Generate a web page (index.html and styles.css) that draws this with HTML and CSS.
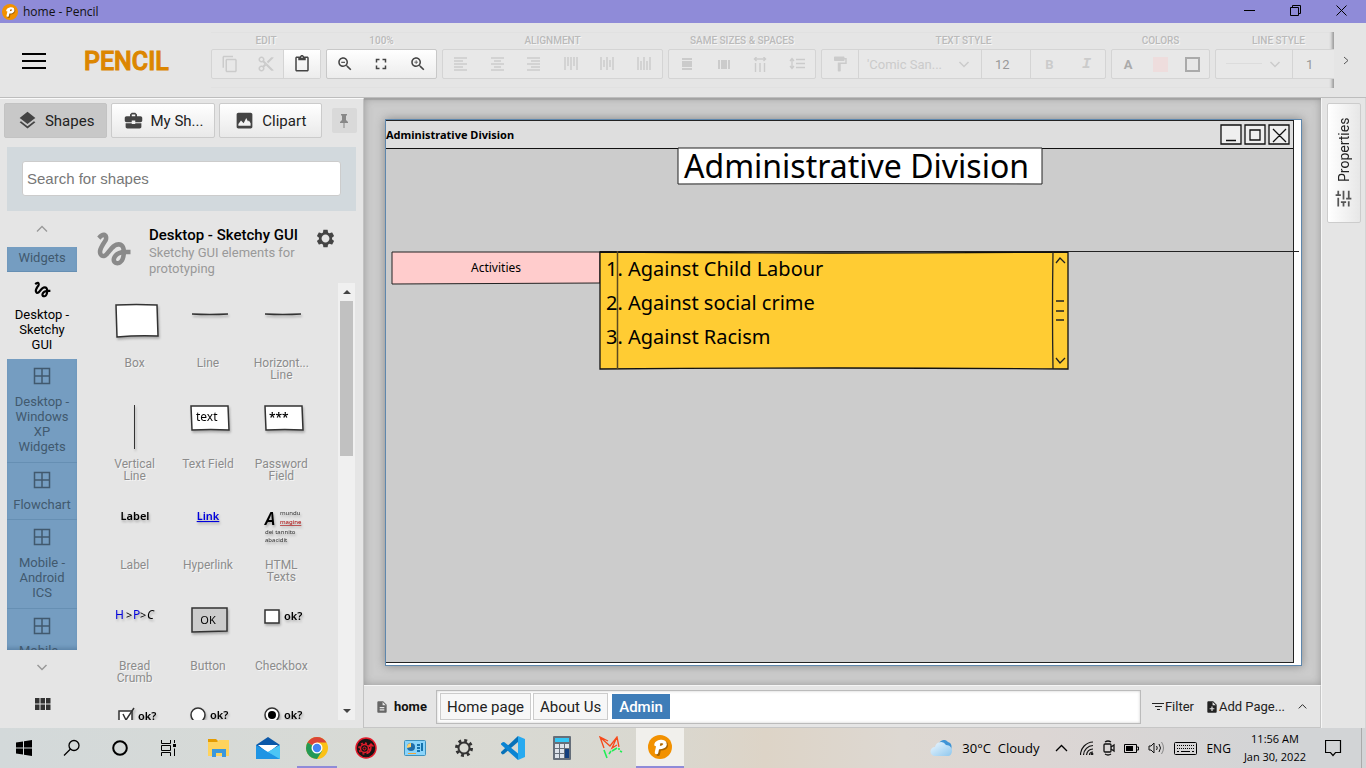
FILE: index.html
```html
<!DOCTYPE html>
<html lang="en">
<head>
<meta charset="utf-8">
<title>home - Pencil</title>
<link rel="stylesheet" href="styles.css">
</head>
<body>
<svg class="defs" aria-hidden="true">
  <symbol id="pencil-logo" viewBox="0 0 24 24"><circle cx="12" cy="12" r="12" fill="#f29100"/><path d="M9 18l2-10M8.500 9.500c1-3 8-4.500 8.500-1 .5 3-3 4.500-6 4" fill="none" stroke="#a66300" stroke-width="4" stroke-linecap="round" transform="translate(1 1)"/><path d="M8.500 17.500l2-9M8 9.500c1-3 8.500-4.500 9-1 .5 3-3.500 4.500-6.500 4" fill="none" stroke="#fff" stroke-width="3.500" stroke-linecap="round"/></symbol>
  <symbol id="copy" viewBox="0 0 24 24"><path d="M16 1H4c-1.100 0-2 .9-2 2v14h2V3h12V1zm3 4H8c-1.100 0-2 .9-2 2v14c0 1.100.9 2 2 2h11c1.100 0 2-.9 2-2V7c0-1.100-.9-2-2-2zm0 16H8V7h11v14z"/></symbol>
  <symbol id="cut" viewBox="0 0 24 24"><path d="M9.640 7.640c.23-.5.360-1.050.360-1.640 0-2.210-1.790-4-4-4S2 3.790 2 6s1.790 4 4 4c.59 0 1.140-.13 1.640-.36L10 12l-2.360 2.360C7.140 14.130 6.590 14 6 14c-2.210 0-4 1.790-4 4s1.790 4 4 4 4-1.790 4-4c0-.59-.13-1.140-.36-1.640L12 14l7 7h3v-1L9.640 7.640zM6 8c-1.100 0-2-.89-2-2s.9-2 2-2 2 .89 2 2-.9 2-2 2zm0 12c-1.100 0-2-.89-2-2s.9-2 2-2 2 .89 2 2-.9 2-2 2zm6-7.500c-.28 0-.5-.22-.5-.5s.22-.5.5-.5.5.22.5.5-.22.5-.5.5zM19 3l-6 6 2 2 7-7V3z"/></symbol>
  <symbol id="paste" viewBox="0 0 24 24"><path d="M19 2h-4.180C14.400.84 13.300 0 12 0c-1.300 0-2.400.84-2.820 2H5c-1.100 0-2 .9-2 2v16c0 1.100.9 2 2 2h14c1.100 0 2-.9 2-2V4c0-1.100-.9-2-2-2zm-7 0c.55 0 1 .45 1 1s-.45 1-1 1-1-.45-1-1 .45-1 1-1zm7 18H5V4h2v3h10V4h2v16z"/></symbol>
  <symbol id="lens" viewBox="0 0 24 24"><path d="M15.500 14h-.79l-.28-.27C15.410 12.590 16 11.110 16 9.500 16 5.910 13.090 3 9.500 3S3 5.910 3 9.500 5.910 16 9.500 16c1.610 0 3.090-.59 4.230-1.570l.27.28v.79l5 4.990L20.490 19l-4.990-5zm-6 0C7.010 14 5 11.990 5 9.500S7.010 5 9.500 5 14 7.010 14 9.500 11.990 14 9.500 14z"/></symbol>
  <symbol id="fit" viewBox="0 0 24 24"><path d="M7 14H5v5h5v-2H7v-3zm-2-4h2V7h3V5H5v5zm12 7h-3v2h5v-5h-2v3zM14 5v2h3v3h2V5h-5z"/></symbol>
  <symbol id="paint" viewBox="0 0 24 24"><path d="M18 4V3c0-.55-.45-1-1-1H5c-.55 0-1 .45-1 1v4c0 .55.45 1 1 1h12c.55 0 1-.45 1-1V6h1v4H9v11c0 .55.45 1 1 1h2c.55 0 1-.45 1-1v-9h8V4h-3z"/></symbol>
  <symbol id="layers" viewBox="0 0 24 24"><path d="M11.990 18.540l-7.370-5.730L3 14.070l9 7 9-7-1.630-1.270-7.380 5.740zM12 16l7.360-5.730L21 9l-9-7-9 7 1.630 1.270L12 16z"/></symbol>
  <symbol id="case" viewBox="0 0 24 24"><path d="M10 16v-1H3v4c0 1.110.89 2 2 2h14c1.110 0 2-.89 2-2v-4h-7v1h-4zm10-9h-4V5l-2-2h-4L8 5v2H4c-1.100 0-2 .9-2 2v3c0 1.110.89 2 2 2h6v-2h4v2h6c1.100 0 2-.9 2-2V9c0-1.100-.9-2-2-2zm-6 0h-4V5h4v2z"/></symbol>
  <symbol id="image" viewBox="0 0 24 24"><path fill-rule="evenodd" d="M21 19V5c0-1.100-.9-2-2-2H5c-1.100 0-2 .9-2 2v14c0 1.100.9 2 2 2h14c1.100 0 2-.9 2-2zM5 18v-2l3-4 3 3 3-6 2 4 1-1 2 3v3z"/></symbol>
  <symbol id="gesture" viewBox="0 0 24 24"><path d="M4.590 6.890c.7-.71 1.400-1.350 1.710-1.220.5.2 0 1.030-.3 1.520-.25.42-2.860 3.890-2.860 6.310 0 1.280.48 2.340 1.340 2.980.75.56 1.740.73 2.640.46 1.070-.31 1.950-1.400 3.060-2.770 1.210-1.490 2.830-3.440 4.080-3.440 1.630 0 1.650 1.010 1.760 1.790-3.780.64-5.380 3.670-5.380 5.370 0 1.700 1.440 3.090 3.210 3.090 1.630 0 4.290-1.330 4.690-6.100H21v-2.500h-2.470c-.15-1.650-1.090-4.200-4.030-4.200-2.250 0-4.180 1.910-4.940 2.840-.58.73-2.060 2.480-2.290 2.720-.25.3-.68.84-1.110.84-.45 0-.72-.83-.36-1.920.35-1.090 1.400-2.860 1.850-3.520.78-1.140 1.300-1.920 1.300-3.280C8.950 3.690 7.310 3 6.440 3 5.120 3 3.970 4 3.720 4.250c-.36.36-.66.66-.88.93l1.750 1.710zm9.290 11.660c-.31 0-.74-.26-.74-.72 0-.6.73-2.200 2.870-2.760-.3 2.690-1.430 3.480-2.130 3.480z"/></symbol>
  <symbol id="gear" viewBox="0 0 24 24"><path d="M19.430 12.980c.04-.32.07-.64.07-.98s-.03-.66-.07-.98l2.110-1.650c.19-.15.24-.42.12-.64l-2-3.460c-.12-.22-.39-.3-.61-.22l-2.490 1c-.52-.4-1.080-.73-1.690-.98l-.38-2.650C14.460 2.180 14.250 2 14 2h-4c-.25 0-.46.18-.49.42l-.38 2.650c-.61.25-1.170.59-1.690.98l-2.490-1c-.23-.09-.49 0-.61.22l-2 3.460c-.13.22-.07.49.12.64l2.110 1.650c-.04.32-.07.65-.07.98s.03.66.07.98l-2.110 1.650c-.19.15-.24.42-.12.64l2 3.460c.12.22.39.3.61.22l2.490-1c.52.4 1.080.73 1.690.98l.38 2.650c.03.24.24.42.49.42h4c.25 0 .46-.18.49-.42l.38-2.650c.61-.25 1.170-.59 1.690-.98l2.490 1c.23.09.49 0 .61-.22l2-3.460c.12-.22.07-.49-.12-.64l-2.110-1.650zM12 16.500c-2.480 0-4.500-2.020-4.500-4.500s2.020-4.500 4.500-4.500 4.500 2.020 4.500 4.500-2.020 4.500-4.500 4.500z"/></symbol>
  <symbol id="panes" viewBox="0 0 18 18"><path d="M1.500 1.500h15v15h-15zM9 1.500v15M1.500 9h15" fill="none" stroke="currentColor" stroke-width="1.500"/></symbol>
  <symbol id="pin" viewBox="0 0 12 16"><path d="M3 1h6v1.500H8V7l2 2v1H2V9l2-2V2.500H3zM5.500 10h1v5h-1z"/></symbol>
  <symbol id="tune" viewBox="0 0 24 24"><path d="M3 17v2h6v-2H3zM3 5v2h10V5H3zm10 16v-2h8v-2h-8v-2h-2v6h2zM7 9v2H3v2h4v2h2V9H7zm14 4v-2H11v2h10zm-6-4h2V7h4V5h-4V3h-2v6z"/></symbol>
  <symbol id="doc" viewBox="0 0 24 24"><path d="M14 2H6c-1.100 0-1.990.9-1.990 2L4 20c0 1.100.89 2 1.990 2H18c1.100 0 2-.9 2-2V8l-6-6zm2 16H8v-2h8v2zm0-4H8v-2h8v2zm-3-5V3.500L18.500 9H13z"/></symbol>
  <symbol id="add" viewBox="0 0 24 24"><path d="M14 2H6c-1.100 0-1.990.9-1.990 2L4 20c0 1.100.89 2 1.990 2H18c1.100 0 2-.9 2-2V8l-6-6zm2 14h-3v3h-2v-3H8v-2h3v-3h2v3h3v2zm-3-7V3.500L18.500 9H13z"/></symbol>
  <symbol id="up" viewBox="0 0 12 12"><path d="M1 8.500l5-5 5 5" fill="none" stroke="currentColor" stroke-width="1.300"/></symbol>
  <symbol id="down" viewBox="0 0 12 12"><path d="M1.500 4L6 8.500 10.500 4" fill="none" stroke="currentColor" stroke-width="1.500"/></symbol>
</svg>

<header class="titlebar">
  <svg class="app-icon"><use href="#pencil-logo"/></svg>
  <h1 class="window-name">home - Pencil</h1>
  <button class="sys" aria-label="Minimize"><svg width="11" height="11"><path d="M0 5.500h11" stroke="#000"/></svg></button>
  <button class="sys" aria-label="Restore"><svg width="11" height="11"><path d="M.5 2.500h8v8h-8zM2.500 2V.5h8v8H9" fill="none" stroke="#000"/></svg></button>
  <button class="sys" aria-label="Close"><svg width="11" height="11"><path d="M.5.5l10 10M10.500.5l-10 10" stroke="#000"/></svg></button>
</header>

<div class="toolbar">
  <button class="burger" aria-label="Menu"><svg width="24" height="16"><path d="M0 1h24M0 8h24M0 15h24" stroke="#000" stroke-width="2"/></svg></button>
  <div class="brand">PENCIL</div>
  <div class="groups">
    <section class="group g-edit"><h2>EDIT</h2><div class="bar">
      <button disabled aria-label="Copy"><svg class="i18"><use href="#copy"/></svg></button>
      <button disabled aria-label="Cut"><svg class="i18"><use href="#cut"/></svg></button>
      <button class="on sep" aria-label="Paste"><svg class="i18"><use href="#paste"/></svg></button></div></section>
    <section class="group g-zoom"><h2>100%</h2><div class="bar on">
      <button aria-label="Zoom out"><svg class="i18" viewBox="0 0 24 24"><use href="#lens"/><path d="M7 9h5v1.500H7z"/></svg></button>
      <button aria-label="Fit"><svg class="i18"><use href="#fit"/></svg></button>
      <button aria-label="Zoom in"><svg class="i18" viewBox="0 0 24 24"><use href="#lens"/><path d="M12 10h-2v2H9v-2H7V9h2V7h1v2h2z"/></svg></button></div></section>
    <section class="group g-align"><h2>ALIGNMENT</h2><div class="bar">
      <button disabled aria-label="Align left"><svg width="14" height="14"><path d="M0 1h13M0 4h9M0 7h13M0 10h9M0 13h13" stroke="currentColor" stroke-width="1.400"/></svg></button>
      <button disabled aria-label="Align center"><svg width="14" height="14"><path d="M0 1h13M3 4h7M0 7h13M3 10h7M0 13h13" stroke="currentColor" stroke-width="1.400"/></svg></button>
      <button disabled aria-label="Align right"><svg width="14" height="14"><path d="M0 1h13M4 4h9M0 7h13M4 10h9M0 13h13" stroke="currentColor" stroke-width="1.400"/></svg></button>
      <button disabled aria-label="Align top"><svg width="14" height="14"><path d="M1 0v13M4 0v9M7 0v13M10 0v9M13 0v13" stroke="currentColor" stroke-width="1.400"/></svg></button>
      <button disabled aria-label="Align middle"><svg width="14" height="14"><path d="M1 0v13M4 3v7M7 0v13M10 3v7M13 0v13" stroke="currentColor" stroke-width="1.400"/></svg></button>
      <button disabled aria-label="Align bottom"><svg width="14" height="14"><path d="M1 0v13M4 4v9M7 0v13M10 4v9M13 0v13" stroke="currentColor" stroke-width="1.400"/></svg></button></div></section>
    <section class="group g-same"><h2>SAME SIZES &amp; SPACES</h2><div class="bar">
      <button disabled aria-label="Same width"><svg width="14" height="14"><path d="M2 1h10v2H2zM2 4h10v6H2zM2 11h10v2H2z"/></svg></button>
      <button disabled aria-label="Same height"><svg width="14" height="14"><path d="M1 3h2v9H1zM4 3h6v9H4zM11 3h2v9h-2z"/></svg></button>
      <button disabled aria-label="Same horizontal spacing"><svg width="14" height="15"><path d="M2 2h10M3.500 0L1.500 2l2 2M10.500 0l2 2-2 2M2.500 6v9M7 6v9M11.500 6v9" fill="none" stroke="currentColor" stroke-width="1.400"/></svg></button>
      <button disabled aria-label="Same vertical spacing"><svg width="16" height="14"><path d="M3 2v9M1 4l2-2.500L5 4M1 9l2 2.500L5 9M7 2.500h9M7 6.500h9M7 10.500h9" fill="none" stroke="currentColor" stroke-width="1.300"/></svg></button></div></section>
    <section class="group g-text"><h2>TEXT STYLE</h2><div class="bar">
      <button disabled aria-label="Copy format" class="fixed"><svg class="i18"><use href="#paint"/></svg></button>
      <div class="pick font"><select disabled aria-label="Font"><option>'Comic San...</option></select><svg class="i12"><use href="#down"/></svg></div>
      <input class="num size" aria-label="Font size" value="12" disabled>
      <button disabled aria-label="Bold" class="bold sep">B</button>
      <button disabled aria-label="Italic" class="ital">I</button></div></section>
    <section class="group g-color"><h2>COLORS</h2><div class="bar">
      <button aria-label="Text color" class="ca">A</button>
      <button aria-label="Fill color"><span class="swatch pink"></span></button>
      <button aria-label="Line color"><span class="swatch line"></span></button></div></section>
    <section class="group g-line"><h2>LINE STYLE</h2><div class="bar">
      <div class="pick stroke"><select disabled aria-label="Line style"><option>&nbsp;</option></select><span class="dash"></span><svg class="i12"><use href="#down"/></svg></div>
      <input class="num sep" aria-label="Line width" value="1" disabled></div></section>
  </div>
  <button class="more" aria-label="More tools"><svg width="6" height="9"><path d="M1 1l4 3.500L1 8" fill="none" stroke="#555"/></svg></button>
</div>

<main class="work">
  <aside class="side">
    <nav class="tabs">
      <button class="tab active"><svg class="i20"><use href="#layers"/></svg>Shapes</button>
      <button class="tab"><svg class="i20"><use href="#case"/></svg>My Sh...</button>
      <button class="tab"><svg class="i20"><use href="#image"/></svg>Clipart</button>
      <button class="pin" aria-label="Pin"><svg width="12" height="16"><use href="#pin"/></svg></button>
    </nav>
    <div class="search"><input type="text" placeholder="Search for shapes" aria-label="Search for shapes"></div>
    <div class="browser">
      <div class="cats">
        <button class="arrow" aria-label="Scroll up"><svg class="i12"><use href="#up"/></svg></button>
        <div class="cat-list">
          <button class="cat first">Widgets</button>
          <button class="cat multi active"><svg class="i20"><use href="#gesture"/></svg>Desktop - Sketchy GUI</button>
          <button class="cat multi"><svg class="i18"><use href="#panes"/></svg>Desktop - Windows XP Widgets</button>
          <button class="cat"><svg class="i18"><use href="#panes"/></svg>Flowchart</button>
          <button class="cat multi"><svg class="i18"><use href="#panes"/></svg>Mobile - Android ICS</button>
          <button class="cat"><svg class="i18"><use href="#panes"/></svg>Mobile -</button>
        </div>
        <button class="arrow" aria-label="Scroll down"><svg class="i12"><use href="#down"/></svg></button>
        <button class="tiles" aria-label="All collections"><svg width="16" height="12" viewBox="0 0 16 12"><path d="M0 0h4.500v5.500H0zM5.500 0H10v5.500H5.500zM11 0h4.500v5.500H11zM0 6.500h4.500V12H0zM5.500 6.500H10V12H5.500zM11 6.500h4.500V12H11z"/></svg></button>
      </div>
      <section class="collection">
        <div class="col-head">
          <svg class="col-icon"><use href="#gesture"/></svg>
          <div class="col-text"><h2>Desktop - Sketchy GUI</h2><p>Sketchy GUI elements for prototyping</p></div>
          <button class="cog" aria-label="Collection settings"><svg class="i20"><use href="#gear"/></svg></button>
        </div>
        <div class="shape-scroll">
          <div class="shapes">
            <figure><svg class="thumb"><path d="M17 4q20-1 41 0l1 31q-20-1-41 1z" class="sk"/></svg><figcaption>Box</figcaption></figure>
            <figure><svg class="thumb"><path d="M20 13q18 1 36 0" class="sk"/></svg><figcaption>Line</figcaption></figure>
            <figure><svg class="thumb"><path d="M20 13q18 1 36 0" class="sk"/></svg><figcaption>Horizont... Line</figcaption></figure>
            <figure><svg class="thumb"><path d="M35.500 3v44" class="sk thin"/></svg><figcaption>Vertical Line</figcaption></figure>
            <figure><svg class="thumb"><path d="M19 4h37l1 24q-18-1-37 0z" class="sk"/><text x="24" y="19" class="t12">text</text></svg><figcaption>Text Field</figcaption></figure>
            <figure><svg class="thumb"><path d="M20 4h37l1 24q-18-1-37 0z" class="sk"/><text x="24" y="20" class="t12 b">***</text></svg><figcaption>Password Field</figcaption></figure>
            <figure><svg class="thumb"><text x="36" y="17" class="t11 b mid">Label</text></svg><figcaption>Label</figcaption></figure>
            <figure><svg class="thumb"><text x="36" y="17" class="t11 b mid blue u">Link</text></svg><figcaption>Hyperlink</figcaption></figure>
            <figure><svg class="thumb"><text x="20" y="22" class="big">A</text><text x="35" y="12" class="t6">mundu</text><text x="35" y="21" class="t6 red u">magine</text><text x="20" y="31" class="t6">dei tannito</text><text x="20" y="39" class="t6">abacidit</text></svg><figcaption>HTML Texts</figcaption></figure>
            <figure><svg class="thumb"><text x="16" y="15" class="t12 blue">H</text><text x="27" y="15" class="t11">&gt;</text><text x="34" y="15" class="t12 blue">P</text><text x="41" y="15" class="t11">&gt;</text><text x="48" y="15" class="t12 i">C</text></svg><figcaption>Bread Crumb</figcaption></figure>
            <figure><svg class="thumb"><path d="M20 4h35v23l-35 1z" class="sk gray"/><text x="36" y="20" class="t11 mid">OK</text></svg><figcaption>Button</figcaption></figure>
            <figure><svg class="thumb"><path d="M20 6h14v13H20z" class="sk"/><text x="39" y="16" class="t11 b">ok?</text></svg><figcaption>Checkbox</figcaption></figure>
            <figure><svg class="thumb"><path d="M20 6h13v13H20z" class="sk"/><path d="M24 9l3 6 8-12" class="sk no"/><text x="39" y="15" class="t11 b">ok?</text></svg></figure>
            <figure><svg class="thumb"><circle cx="26" cy="10" r="7" class="sk"/><text x="38" y="14" class="t11 b">ok?</text></svg></figure>
            <figure><svg class="thumb"><circle cx="27" cy="10" r="7" class="sk"/><circle cx="27" cy="10" r="4"/><text x="39" y="14" class="t11 b">ok?</text></svg></figure>
          </div>
          <div class="scrollbar"><svg width="17" height="18"><path d="M5 11l4-4 4 4z"/></svg><div class="thumbbar"></div><svg width="17" height="18"><path d="M5 7l4 4 4-4z"/></svg></div>
        </div>
      </section>
    </div>
  </aside>

  <section class="center">
    <div class="stage">
      <div class="page">
        <div class="mock-window">
          <div class="mock-title"><span>Administrative Division</span>
            <svg width="70" height="23"><path d="M1 2h20v19H1zM25 2h20v19H25zM49 2h20v19H49z" fill="#fff" fill-opacity=".5" stroke="#111" stroke-width="1.300"/><path d="M6 17.500h10M30 7h10v10H30zM53 6l13 13M66 6L53 19" fill="none" stroke="#111" stroke-width="1.300"/></svg>
          </div>
        </div>
        <div class="rule"></div>
        <div class="heading"><svg width="366" height="38"><path d="M1 1h364v36q-180-1-364 0z" fill="#fff" stroke="#222"/></svg><span>Administrative Division</span></div>
        <div class="act"><svg width="210" height="34"><path d="M1 1h208v31l-208 1z" fill="#fcc" stroke="#222"/></svg><span>Activities</span></div>
        <div class="note"><svg width="470" height="120"><path d="M1 1q230 2 468 0v117q-230-2-468 0z" fill="#fc3" stroke="#111" stroke-width="1.300"/><path d="M454 1q-1 60 0 117M457 12l4-5 5 5M457 107l4 5 5-5M457 50h8M457 60h8M457 69h8" fill="none" stroke="#222" stroke-width="1.300"/><path d="M18.500 0v118" stroke="#5a4920" stroke-width="1.500"/></svg>
          <ul><li>1. Against Child Labour</li><li>2. Against social crime</li><li>3. Against Racism</li></ul></div>
      </div>
    </div>
    <footer class="pages">
      <div class="crumb"><svg class="i14"><use href="#doc"/></svg><b>home</b></div>
      <div class="page-tabs"><button>Home page</button><button>About Us</button><button class="active">Admin</button></div>
      <button class="link filter"><svg width="13" height="9"><path d="M0 1.500h12M3 4.500h7M5 7.500h3" stroke="currentColor"/></svg>Filter</button>
      <button class="link addp"><svg class="i14"><use href="#add"/></svg>Add Page...</button>
      <button class="link fold" aria-label="Collapse"><svg width="9" height="9" viewBox="0 0 12 12"><use href="#up"/></svg></button>
    </footer>
  </section>

  <aside class="rail"><button class="props"><svg class="i20"><use href="#tune"/></svg>Properties</button></aside>
</main>

<footer class="taskbar">
  <button class="task" aria-label="Start"><svg width="16" height="16"><path d="M0 2.500l7-1V7.500H0zM8 1.300L16 0v7.500H8zM0 8.500h7v6l-7-1zM8 8.500h8V16l-8-1.300z"/></svg></button>
  <button class="task" aria-label="Search"><svg width="18" height="18"><circle cx="11" cy="6.500" r="5" fill="none" stroke="#000" stroke-width="1.300"/><path d="M7.500 10L1 16.500" stroke="#000" stroke-width="1.300"/></svg></button>
  <button class="task" aria-label="Cortana"><svg width="18" height="18"><circle cx="9" cy="9" r="6.800" fill="none" stroke="#000" stroke-width="2"/></svg></button>
  <button class="task" aria-label="Task view"><svg width="17" height="16"><path d="M1.500 0v3.500h9V0M1.500 16v-3.500h9V16M1.500 5.500h9v5h-9zM14.500 0v3M14.500 8.500V16" fill="none" stroke="#000"/><path d="M13 4h3v3h-3z"/></svg></button>
  <div class="apps">
    <button class="task" aria-label="Files"><svg width="22" height="20"><path d="M0 1h8l2 2h11v5H0z" fill="#e59c00"/><path d="M0 4h9l2-2h10v16H0z" fill="#ffd35c"/><path d="M4 19v-8h14v8h-4v-4H8v4z" fill="#3b98dc"/></svg></button>
    <button class="task" aria-label="Mail"><svg width="24" height="22"><path d="M0 8L12 0l12 8v6H0z" fill="#0b58a8"/><path d="M2 8h20l-10 8z" fill="#fff"/><path d="M24 8v14H0l12-7z" fill="#35b1ee"/><path d="M0 8l12 7 12 7H0z" fill="#1f95e4"/><path d="M24 8L12 15l12 7z" fill="#4cc6f5"/></svg></button>
    <button class="task run" aria-label="Chrome"><svg width="22" height="22" viewBox="0 0 22 22"><circle cx="11" cy="11" r="11" fill="#fbc116"/><path d="M11 11L1.500 5.500A11 11 0 0 1 20.500 5.500H11z" fill="#da4437"/><path d="M1.500 5.500A11 11 0 0 0 11 22l5-8-5-3z" fill="#239957"/><circle cx="11" cy="11" r="5.500" fill="#fff"/><circle cx="11" cy="11" r="4.200" fill="#4285f4"/></svg></button>
    <button class="task" aria-label="Driver Booster"><svg width="22" height="22" viewBox="0 0 22 22"><circle cx="11" cy="11" r="10" fill="#171414" stroke="#e31b2b" stroke-width="1.500"/><g fill="none" stroke="#e31b2b"><circle cx="9.500" cy="11.500" r="4" stroke-width="1.500"/><circle cx="9.500" cy="11.500" r="5.500" stroke-width="1.500" stroke-dasharray="2 2.300"/><circle cx="9.500" cy="11.500" r="1.500"/><path d="M12 16c4-1 4-4 4-8M13.500 9.500L16 7l2.500 2.500" stroke-width="1.500"/></g></svg></button>
    <button class="task" aria-label="Control panel"><svg width="22" height="16"><rect x=".5" y=".5" width="21" height="15" rx="1" fill="#8bd4fa" stroke="#3e91bd"/><circle cx="7" cy="7" r="4" fill="#206da9"/><path d="M7 7V3a4 4 0 0 0-4 5z" fill="#ffd06a"/><path d="M13 5h3M13 8h3M13 11h3M18 3v8" stroke="#1572ac" stroke-width="2"/><path d="M4 13.500h8" stroke="#f2a53a"/></svg></button>
    <button class="task" aria-label="Settings"><svg width="20" height="20" viewBox="0 0 20 20" fill="none" stroke="#333"><circle cx="10" cy="10" r="5.500" stroke-width="2"/><circle cx="10" cy="10" r="7.500" stroke-width="3" stroke-dasharray="2.900 2.990"/></svg></button>
    <button class="task" aria-label="Visual Studio Code"><svg width="24" height="24" viewBox="0 0 24 24"><path d="M17 0v6L3 18l-1.500.5L0 17v-1z" fill="#0871b8"/><path d="M0 7.500L2 6l1.500.3L17 17.500V24L0 8.500z" fill="#0a84d3"/><path d="M17 0l7 3v18l-7 3z" fill="#28aaf0"/></svg></button>
    <button class="task" aria-label="Calculator"><svg width="18" height="24"><rect width="18" height="24" rx="1" fill="#656e79"/><path d="M2 2h14v4H2z" fill="#34c6f4"/><path d="M2 8h4v4H2zM7 8h4v4H7zM12 8h4v4h-4zM2 13h4v4H2zM7 13h4v4H7zM2 18h4v4H2zM7 18h4v4H7z" fill="#dde3ea"/><path d="M12 13h4v9h-4z" fill="#143f7d"/></svg></button>
    <button class="task" aria-label="Fox"><svg width="24" height="24" fill="none" stroke-width="1.300"><path d="M5 12L1 1l8 4M2 2l9 8 7-9 2 10M18 1l-5 11 5-3" stroke="#f64a1b"/><path d="M5 14l3 8M12 15l-2 3M18 12l-5 3M20 12v2M23 16l-2-1" stroke="#20ee55" stroke-width="1.600"/></svg></button>
    <button class="task open" aria-label="Pencil"><svg width="24" height="24"><use href="#pencil-logo"/></svg></button>
  </div>
  <div class="tray">
    <svg width="23" height="17" viewBox="0 0 23 17"><defs><linearGradient id="cl" x2="1" y2="1"><stop stop-color="#eef8ff"/><stop offset="1" stop-color="#8ec7ee"/></linearGradient></defs><path d="M9 5a5 5 0 0 1 9-3c4 1 4 5 3 8z" fill="#3f94d6"/><path d="M5 16a4.500 4.500 0 0 1 0-9 6 6 0 0 1 11-2c4 0 6 3 6 6s-2 5-4 5z" fill="url(#cl)"/></svg>
    <span class="weather">30°C&nbsp; Cloudy</span>
    <svg class="t-up" width="13" height="8"><path d="M1 7l5.500-5.500L12 7" fill="none" stroke="#000" stroke-width="1.300"/></svg>
    <svg width="14" height="14" fill="none" stroke="#111"><path d="M.5 14A13 13 0 0 1 13 1M3.500 14A10 10 0 0 1 13 4.500M6.500 14A7 7 0 0 1 13 8M9.500 14q0-3 3.500-3" stroke-width="1.200"/><circle cx="12" cy="13" r="1" fill="#111"/></svg>
    <svg width="12" height="16" fill="none" stroke="#111" stroke-width="1.300"><rect x="1" y="4" width="7" height="8" rx="1"/><path d="M8 7l3-2v6L8 9M2 2q3-2 6 0M2 14q3 2 6 0"/></svg>
    <svg width="15" height="10"><path d="M.5 1.500h12v8H.5zM13 4h1.500v3H13" fill="none" stroke="#000"/><path d="M2 3h7v5H2z"/></svg>
    <svg width="17" height="14" fill="none" stroke="#111"><path d="M1 5h2l3-3v10L3 9H1zM8.500 5q1.500 2 0 4M11 3q3 4 0 8"/><path d="M13.500 1q4 6 0 12" stroke="#888"/></svg>
    <svg width="23" height="13" fill="none" stroke="#000"><rect x=".5" y=".5" width="22" height="12" rx="1"/><path d="M3 3.500h17M3 6.500h17" stroke-dasharray="1 1"/><path d="M3 9.500h2M7 9.500h9M18 9.500h2"/></svg>
    <span class="lang">ENG</span>
    <div class="clock"><span>11:56 AM</span><span>Jan 30, 2022</span></div>
    <svg width="17" height="17"><path d="M.5.500h15v12h-5l-2.500 3-2.500-3h-5z" fill="none" stroke="#000" stroke-width="1.200"/></svg>
  </div>
  <div class="peek"></div>
</footer>
</body>
</html>
```
FILE: styles.css
```css
* { box-sizing: border-box; }
body { margin: 0; height: 100vh; display: flex; flex-direction: column; overflow: hidden; background: #e5e5e5; font-family: Roboto, sans-serif; font-size: 13px; color: #111; }
h1, h2, p, ul, figure { margin: 0; padding: 0; font-weight: 400; }
ul { list-style: none; }
button, input, select { font: inherit; color: inherit; margin: 0; padding: 0; border: 0; background: none; }
button { display: flex; align-items: center; justify-content: center; }
svg { flex: none; fill: currentColor; }
svg[fill="none"] { fill: none; }
.defs { position: absolute; width: 0; height: 0; }
.i12 { width: 12px; height: 12px; }
.i14 { width: 14px; height: 14px; }
.i18 { width: 18px; height: 18px; }
.i20 { width: 21px; height: 21px; }

/* window title */
.titlebar { height: 23px; flex: none; display: flex; align-items: center; background: #8f8bd8; padding: 0 2px; }
.app-icon { width: 16px; height: 16px; }
.window-name { flex: 1; margin-left: 5px; font: 12px "Open Sans", "Noto Sans", sans-serif; }
.sys { width: 46px; height: 22px; padding-bottom: 2px; }

/* toolbar */
.toolbar { flex: none; height: 75px; display: flex; align-items: center; border-bottom: 1px solid #bdbdbd; }
.burger { width: 67px; height: 40px; padding-top: 2px; }
.brand { width: 144px; padding: 2px 0 0 17px; font-size: 25px; font-weight: 500; -webkit-text-stroke: 1px #dc8600; color: #dc8600; }
.groups { flex: 1; min-width: 0; align-self: stretch; display: flex; gap: 5px; margin: 9px 0; overflow: hidden; box-shadow: inset -4px 0 3px -2px #999; }
.group { flex: none; }
.group h2 { height: 17px; line-height: 17px; text-align: center; font-size: 10px; font-weight: 500; color: #bababa; text-shadow: 1px 1px 0 #f6f6f6; }
.bar { display: flex; height: 30px; border: 1px solid #d4d4d4; border-radius: 2px; background: #e8e8e8; color: #cbcbcb; }
.bar > button { flex: 1; }
.bar .on, .bar.on { background: linear-gradient(#fff, #ececec); color: #444; border-color: #c8c8c8; }
.bar .sep { border-left: 1px solid #d4d4d4; }
.g-edit { width: 110px; }
.g-zoom { width: 111px; }
.g-align { width: 221px; }
.g-same { width: 148px; }
.g-text { width: 285px; }
.g-color { width: 99px; }
.g-line { width: 127px; }
.bar > .fixed { flex: 0 0 36px; }
.pick { position: relative; border-left: 1px solid #d4d4d4; }
.pick select { appearance: none; width: 100%; height: 100%; opacity: 1; }
.pick svg { position: absolute; right: 11px; top: 8px; }
.font { width: 123px; font-size: 13px; }
.font select { padding-left: 8px; }
.stroke { width: 81px; border-left: 0; }
.dash { position: absolute; left: 10px; top: 13px; width: 36px; height: 1px; background: #dcdcdc; }
.num { width: 49px; padding-left: 13px; border-left: 1px solid #d4d4d4; color: #999; font-size: 13px; }
.bold { font-weight: 700; }
.ital { font: italic 700 15px "Liberation Mono", monospace; }
.ca { font-weight: 700; font-size: 13px; color: #aaa; }
.swatch { width: 15px; height: 15px; background: #eedddd; }
.swatch.line { background: none; border: 2px solid #aaa; }
.more { width: 32px; padding-right: 8px; height: 40px; }

/* left panel */
.work { flex: 1; min-height: 0; display: flex; }
.side { width: 364px; flex: none; display: flex; flex-direction: column; border-right: 1px solid #c2c2c2; border-top: 1px solid #fafafa; padding: 4px 6px 0 4px; }
.tabs { display: flex; align-items: center; gap: 4px; }
.tab { flex: 1; height: 35px; gap: 7px; font-size: 15px; color: #222; border: 1px solid #cbcbcb; border-radius: 2px; background: linear-gradient(#fff, #e9e9e9); }
.tab svg, .pin svg { color: #444; }
.tab.active { background: #c8c8c8; border-color: #c3c3c3; }
.pin { width: 25px; height: 25px; margin-left: 6px; background: #d9d9d9; border-radius: 2px; }
.pin svg { color: #888; }
.search { background: #d2d9dd; margin: 9px 1px 0 3px; padding: 14px 15px 15px; }
.search input { display: block; width: 100%; height: 35px; padding: 0 4px; font: 15px "Liberation Sans", sans-serif; background: #fff; border: 1px solid #ccc; border-radius: 3px; }
.search input::placeholder { color: #777; }
.browser { flex: 1; min-height: 0; display: flex; margin-left: 3px; }
.cats { width: 70px; display: flex; flex-direction: column; }
.arrow { flex: none; height: 36px; color: #999; }
.cats .arrow:nth-child(3) { height: 33px; }
.cat-list { flex: 1; min-height: 0; overflow: hidden; background: #759dc1; box-shadow: inset 0 -4px 4px -2px #5a82a6; }
.cat { width: 100%; flex-direction: column; gap: 8px; padding: 8px 5px 7px; line-height: 15px; color: #41596e; border-bottom: 1px solid #668fb3; }
.cat.first { padding: 3px 5px 6px; }
.cat.multi { gap: 9px; padding-bottom: 8px; }
.cat.active { background: #e5e5e5; color: #000; border-color: #e5e5e5; padding: 7px 5px 6px; gap: 7px; }
.tiles { height: 42px; margin-bottom: 3px; padding-left: 2px; color: #333; }
.collection { flex: 1; min-width: 0; display: flex; flex-direction: column; padding: 16px 0 8px 15px; }
.col-head { display: flex; height: 56px; }
.col-icon { width: 44px; height: 44px; color: #8a8a8a; flex: none; }
.col-text { flex: 1; margin-left: 13px; color: #999; line-height: 16px; }
.col-text h2 { font-size: 15px; line-height: 16px; font-weight: 500; color: #000; white-space: nowrap; }
.col-text p { padding-top: 2px; }
.cog { width: 22px; height: 22px; margin-right: 21px; color: #444; }
.shape-scroll { flex: 1; min-height: 0; display: flex; justify-content: space-between; margin-right: 2px; }
.shapes { width: 220px; margin-left: 6px; padding-top: 18px; overflow: hidden; display: grid; grid-template-columns: repeat(3, 1fr); grid-auto-rows: 101px; }
.shapes figure { display: flex; flex-direction: column; align-items: center; }
.thumb { width: 72px; height: 56px; filter: drop-shadow(1px 2px 1px #aaa); color: #000; font-family: "Comic Sans MS", "Noto Sans", sans-serif; }
figcaption { width: 60px; text-align: center; line-height: 12px; font-size: 12px; color: #8c8c8c; text-shadow: 1px 1px 0 #f5f5f5; }
.sk { fill: #fff; stroke: #333; stroke-width: 1.5px; }
.sk.thin { stroke-width: 1px; }
.sk.gray { fill: #ccc; }
.sk.no { fill: none; }
.t12 { font-size: 12px; }
.t11 { font-size: 11px; }
.t6 { font-size: 6px; fill: #333; }
.big { font-size: 17px; font-style: italic; font-weight: 600; }
.b { font-weight: 600; }
.i { font-style: italic; }
.mid { text-anchor: middle; }
.blue { fill: #00d; }
.red { fill: #a00; }
.u { text-decoration: underline; }
.scrollbar { width: 17px; display: flex; flex-direction: column; background: #f0f0f0; color: #444; }
.scrollbar .thumbbar { height: 155px; margin: 0 2px auto; background: #c1c1c1; }

/* drawing area */
.center { flex: 1; min-width: 0; display: flex; flex-direction: column; }
.stage { flex: 1; min-height: 0; display: flex; padding: 21px 19px 19px 21px; background: #ccc; box-shadow: inset 0 0 8px #999, inset 0 2px 1px #aaa; }
.page { position: relative; flex: 1; min-width: 0; display: flex; background: #fff; border: 1px solid #5e87ad; box-shadow: 0 0 9px #888; padding: 0 7px 2px 0; font-family: "Comic Sans MS", "Noto Sans", sans-serif; color: #000; }
.mock-window { flex: 1; background: #ccc; border: solid #222; border-width: 1px 1px 1px 0; }
.mock-title { display: flex; align-items: center; justify-content: space-between; height: 28px; padding-right: 3px; background: #dedede; border-bottom: 1px solid #111; font-size: 11px; font-weight: 700; }
.rule { position: absolute; left: 214px; right: 2px; top: 131px; height: 1px; background: #222; }
.heading, .act, .note { position: absolute; line-height: 1; }
.heading { left: 291px; top: 27px; font-size: 32px; }
.act { left: 5px; top: 131px; font-size: 12px; }
.note { left: 213px; top: 131px; font-size: 20px; }
.heading svg, .act svg, .note > svg { display: block; }
.heading span, .act span { position: absolute; inset: 0; display: grid; place-items: center; white-space: nowrap; }
.heading span { place-items: center start; padding-left: 7px; }
.note ul { position: absolute; left: 7px; top: 1px; line-height: 34px; }

/* page tabs */
.pages { height: 43px; flex: none; display: flex; align-items: center; border-top: 1px solid #f5f5f5; border-bottom: 1px solid #c6c6c6; border-right: 1px solid #c6c6c6; }
.crumb { width: 72px; display: flex; align-items: center; gap: 5px; padding-left: 11px; color: #111; }
.crumb svg { color: #666; }
.page-tabs { flex: 1; display: flex; align-items: center; gap: 2px; height: 34px; padding: 0 3px; background: #fff; border: 1px solid #bbb; box-shadow: inset 0 0 3px #ccc; }
.page-tabs button { height: 27px; padding: 0 6px; background: #f7f7f7; border: 1px solid #ccc; font-size: 15px; color: #222; }
.page-tabs .active { height: 25px; margin-left: 2px; background: #3f7db8; border-color: #3f7db8; color: #fff; font-weight: 500; }
.link { color: #222; white-space: nowrap; }
.filter { margin-left: 11px; }
.addp { margin-left: 11px; }
.fold { width: 35px; }

/* right rail */
.rail { width: 45px; flex: none; padding: 5px 0 0 5px; border-left: 1px solid #f6f6f6; border-right: 1px solid #d5d5d5; }
.props { writing-mode: vertical-rl; transform: rotate(180deg); width: 34px; height: 120px; gap: 6px; font-size: 14px; color: #222; border: 1px solid #ccc; border-radius: 2px; background: linear-gradient(to left, #fff, #e7e7e7); }
.props svg { transform: rotate(90deg); color: #555; }

/* desktop taskbar */
.taskbar { height: 40px; flex: none; display: flex; background: linear-gradient(90deg, #d3d9da, #d8dad5 28%, #d9d8d0 48%, #ddd4c7 56%, #ddd8d2 66%, #dcd6d4 76%, #d2d4d6 95%); color: #000; font: 12px "Open Sans", "Noto Sans", sans-serif; }
.task { width: 48px; height: 40px; flex: none; }
.apps { display: flex; gap: 1px; margin-left: 3px; }
.task.open { background: #f1f0ec; border-bottom: 2px solid #8f8bd8; }
.task.run { background: linear-gradient(#8f8bd8, #8f8bd8) center bottom / 40px 2px no-repeat; }
.tray { flex: 1; display: flex; align-items: center; justify-content: flex-end; gap: 9px; padding-right: 19px; white-space: nowrap; }
.weather { font-size: 13px; }
.t-up { margin: 0 3px 0 7px; }
.clock { display: flex; flex-direction: column; align-items: center; line-height: 18px; margin-left: 4px; margin-right: 10px; font-size: 11px; }
.peek { width: 5px; border-left: 1px solid #aaa; }
```
